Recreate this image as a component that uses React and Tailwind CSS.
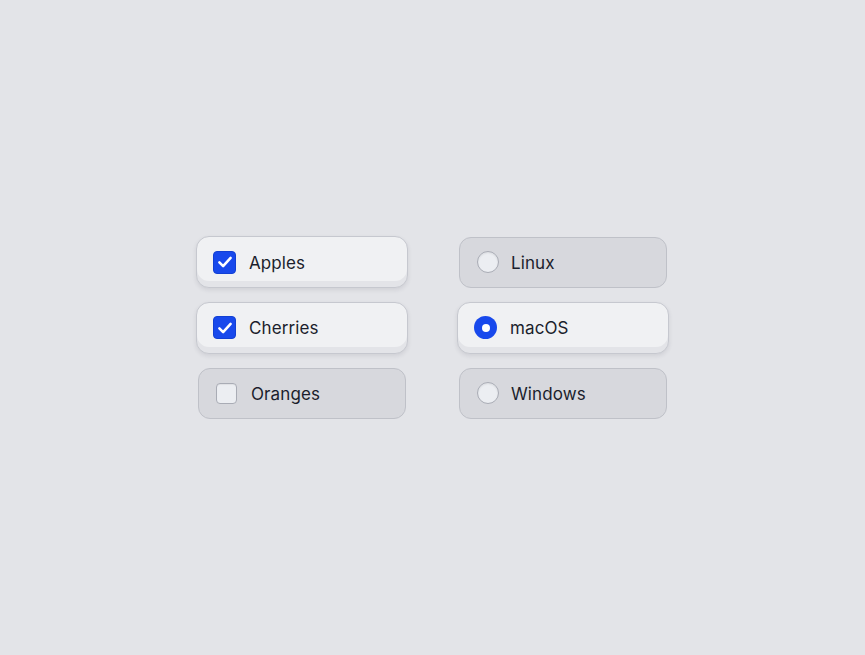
import React, { useState } from 'react';

const fruits = ['Apples', 'Cherries', 'Oranges'];
const systems = ['Linux', 'macOS', 'Windows'];

function Card({ active, onClick, children }) {
  return (
    <button
      type="button"
      onClick={onClick}
      className={
        active
          ? 'flex items-center w-[212px] h-[52px] -mx-[2px] -my-[0.5px] pl-[16px] rounded-[13px] border border-[#c6c8cf] bg-[#f0f1f3] shadow-[inset_0_-6px_0_#e3e4e8,0_2px_4px_rgba(40,44,60,0.10)] text-left'
          : 'flex items-center w-[208px] h-[51px] pl-[17px] rounded-[12px] border border-[#bfc1c8] bg-[#d7d8dd] text-left'
      }
    >
      {children}
    </button>
  );
}

function Check({ on }) {
  if (!on) {
    return <span className="block w-[21px] h-[21px] rounded-[4px] border border-[#a9acb5] bg-[#eceef2] shadow-[inset_0_1px_1px_rgba(0,0,0,0.06)]" />;
  }
  return (
    <span className="flex items-center justify-center w-[23px] h-[23px] rounded-[4px] bg-[#1849ec] border border-[#1240d4]">
      <svg width="18" height="18" viewBox="0 0 24 24" fill="none" stroke="white" strokeWidth="3.4" strokeLinecap="round" strokeLinejoin="round">
        <path d="M4.5 12.5l5 5L19.5 6.5" />
      </svg>
    </span>
  );
}

function Radio({ on }) {
  if (!on) {
    return <span className="block w-[22px] h-[22px] rounded-full border border-[#a9acb5] bg-[#eceef2] shadow-[inset_0_1px_2px_rgba(0,0,0,0.08)]" />;
  }
  return (
    <span className="flex items-center justify-center w-[23px] h-[23px] rounded-full bg-[#1849ec]">
      <span className="block w-[8px] h-[8px] rounded-full bg-white" />
    </span>
  );
}

export default function App() {
  const [picked, setPicked] = useState({ Apples: true, Cherries: true, Oranges: false });
  const [os, setOs] = useState('macOS');

  return (
    <div className="min-h-screen w-full bg-[#e3e4e8] flex items-center justify-center" style={{ fontFamily: 'Inter, "Noto Sans", sans-serif' }}>
      <div className="flex gap-[53px]">
        <div className="flex flex-col gap-[14.5px]">
          {fruits.map(f => (
            <Card key={f} active={picked[f]} onClick={() => setPicked({ ...picked, [f]: !picked[f] })}>
              <Check on={picked[f]} />
              <span className={`${picked[f] ? 'ml-[13px]' : 'ml-[14px]'} mt-[3px] text-[17px] text-[#1b1e2c] tracking-[0.1px]`}>{f}</span>
            </Card>
          ))}
        </div>
        <div className="flex flex-col gap-[14.5px]">
          {systems.map(s => (
            <Card key={s} active={os === s} onClick={() => setOs(s)}>
              <Radio on={os === s} />
              <span className={`${os === s ? 'ml-[13px]' : 'ml-[12px]'} mt-[3px] text-[17px] text-[#1b1e2c] tracking-[0.1px]`}>{s}</span>
            </Card>
          ))}
        </div>
      </div>
    </div>
  );
}
